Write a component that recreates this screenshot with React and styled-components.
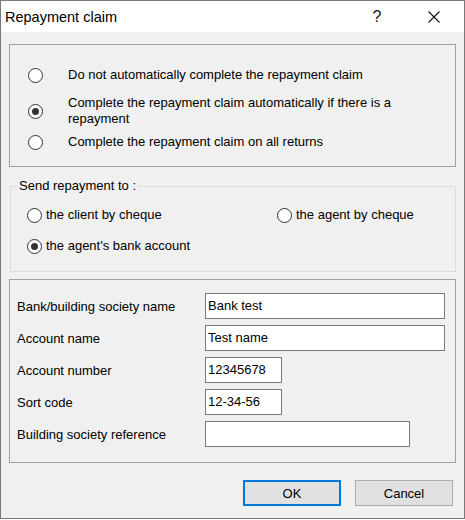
import React from "react";
import styled, { createGlobalStyle } from "styled-components";

const GlobalStyle = createGlobalStyle`
  body {
    margin: 0;
    background: #ffffff;
    font-family: "Liberation Sans", Arial, sans-serif;
  }
`;

const Window = styled.div`
  width: 465px;
  height: 519px;
  box-sizing: border-box;
  border: 1px solid #7a7a7a;
  background: #f0f0f0;
  display: flex;
  flex-direction: column;
  font-family: "Liberation Sans", Arial, sans-serif;
  font-size: 13px;
  color: #000;
`;

const TitleBar = styled.div`
  height: 31px;
  background: #ffffff;
  display: flex;
  align-items: center;
  padding: 0 7px 0 4px;
`;

const Title = styled.div`
  flex: 1;
  font-size: 14.5px;
  line-height: 18px;
  padding-top: 1px;
`;

const TitleButton = styled.div`
  width: 46px;
  height: 31px;
  display: flex;
  align-items: center;
  justify-content: center;
  font-size: 16px;
  color: #111;
`;

const TitleButtons = styled.div`
  display: flex;
  gap: 11px;
`;

const Body = styled.div`
  flex: 1;
  display: flex;
  flex-direction: column;
  padding: 12px 8px 0 8px;
`;

const Box = styled.div`
  border: 1px solid #a0a0a0;
  padding: ${(p) => p.$padding};
  margin-top: ${(p) => p.$top || 0}px;
`;

const OptionList = styled.div`
  display: flex;
  flex-direction: column;
`;

const Option = styled.div`
  display: flex;
  align-items: center;
  gap: ${(p) => p.$gap || 4}px;
  margin-top: ${(p) => p.$top || 0}px;
  min-height: 16px;
  line-height: 16px;
`;

const Circle = styled.span`
  position: relative;
  flex: none;
  width: 15px;
  height: 15px;
  box-sizing: border-box;
  border: 1px solid #333333;
  border-radius: 50%;
  background: #ffffff;

  &::after {
    content: "";
    display: ${(p) => (p.$checked ? "block" : "none")};
    position: absolute;
    left: 3px;
    top: 3px;
    width: 7px;
    height: 7px;
    border-radius: 50%;
    background: #333333;
  }
`;

const OptionText = styled.span`
  max-width: ${(p) => p.$max || "none"};
`;

const Group = styled.fieldset`
  margin: 11px 0 0 1px;
  border: 1px solid #dcdcdc;
  padding: 13px 0 17px 0;
  min-width: 0;
`;

const Legend = styled.legend`
  margin-left: 6px;
  padding: 0 2px;
  line-height: 16px;
`;

const SendGrid = styled.div`
  display: grid;
  grid-template-columns: 250px 1fr;
  row-gap: 15px;
  align-items: center;
  padding-left: 16px;
`;

const Fields = styled.div`
  display: grid;
  grid-template-columns: 188px 1fr;
  row-gap: 6px;
  align-items: center;
  margin-top: 7px;
`;

const Field = styled.input`
  width: ${(p) => p.$width}px;
  height: 26px;
  box-sizing: border-box;
  border: 1px solid #7a7a7a;
  background: #ffffff;
  padding: 0 2px 2px;
  font-family: "Liberation Sans", Arial, sans-serif;
  font-size: 13px;
  color: #000;
  outline: none;
`;

const Buttons = styled.div`
  display: flex;
  justify-content: flex-end;
  gap: 14px;
  margin-top: 17px;
  padding-right: 3px;
`;

const Button = styled.button`
  width: 98px;
  height: 26px;
  box-sizing: border-box;
  background: #e1e1e1;
  border: ${(p) => (p.$default ? "2px solid #0078d7" : "1px solid #adadad")};
  font-family: "Liberation Sans", Arial, sans-serif;
  font-size: 13px;
  color: #000;
  padding: 0;
`;

const Radio = ({ checked, children, gap, top, max }) => (
  <Option $gap={gap} $top={top}>
    <Circle $checked={checked} />
    <OptionText $max={max}>{children}</OptionText>
  </Option>
);

const fields = [
  { label: "Bank/building society name", value: "Bank test", width: 240 },
  { label: "Account name", value: "Test name", width: 240 },
  { label: "Account number", value: "12345678", width: 77 },
  { label: "Sort code", value: "12-34-56", width: 77 },
  { label: "Building society reference", value: "", width: 205 },
];

export default function App() {
  return (
    <>
      <GlobalStyle />
      <Window>
        <TitleBar>
          <Title>Repayment claim</Title>
          <TitleButtons>
            <TitleButton>?</TitleButton>
            <TitleButton>
              <svg width="12" height="12" viewBox="0 0 12 12">
                <path d="M0.5 0.5 L11.5 11.5 M11.5 0.5 L0.5 11.5" stroke="#111" strokeWidth="1.1" />
              </svg>
            </TitleButton>
          </TitleButtons>
        </TitleBar>
        <Body>
          <Box $padding="22px 0 16px 18px">
            <OptionList>
              <Radio gap={25}>Do not automatically complete the repayment claim</Radio>
              <Radio gap={25} top={12} checked max="340px">
                Complete the repayment claim automatically if there is a repayment
              </Radio>
              <Radio gap={25} top={7}>Complete the repayment claim on all returns</Radio>
            </OptionList>
          </Box>
          <Group>
            <Legend>Send repayment to :</Legend>
            <SendGrid>
              <Radio>the client by cheque</Radio>
              <Radio>the agent by cheque</Radio>
              <Radio checked>the agent's bank account</Radio>
            </SendGrid>
          </Group>
          <Box $padding="6px 0 15px 7px" $top={7}>
            <Fields>
              {fields.map((f) => (
                <React.Fragment key={f.label}>
                  <span>{f.label}</span>
                  <Field $width={f.width} value={f.value} readOnly />
                </React.Fragment>
              ))}
            </Fields>
          </Box>
          <Buttons>
            <Button $default>OK</Button>
            <Button>Cancel</Button>
          </Buttons>
        </Body>
      </Window>
    </>
  );
}
